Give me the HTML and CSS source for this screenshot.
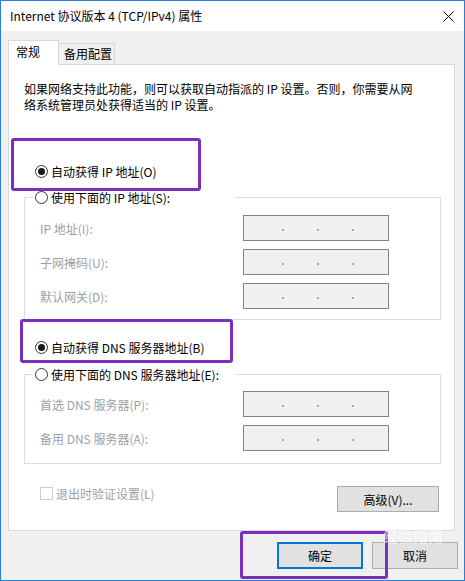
FILE: index.html
```html
<!DOCTYPE html>
<html lang="zh-CN">
<head>
    <meta charset="UTF-8">
    <title>Internet 协议版本 4 (TCP/IPv4) 属性</title>
    <link rel="stylesheet" href="styles.css">
</head>
<body>
    <div class="window">
        <div class="titlebar">
            <span class="title">Internet 协议版本 4 (TCP/IPv4) 属性</span>
            <svg class="close" width="11" height="11" viewBox="0 0 11 11">
                <path d="M0.5 0.5 L10.5 10.5 M10.5 0.5 L0.5 10.5" stroke="#000" stroke-width="1" fill="none"/>
            </svg>
        </div>

        <div class="body">
            <div class="tabs">
                <div class="tab active">常规</div>
                <div class="tab">备用配置</div>
            </div>

            <div class="panel">
                <p class="desc">如果网络支持此功能，则可以获取自动指派的 IP 设置。否则，你需要从网<br>络系统管理员处获得适当的 IP 设置。</p>

                <!-- IP address -->
                <div class="radio-row first"><span class="radio checked"></span>自动获得 IP 地址(O)</div>
                <div class="group group-ip">
                    <div class="group-head"><span class="radio"></span>使用下面的 IP 地址(S):</div>
                    <div class="field">
                        <span class="label">IP 地址(I):</span>
                        <div class="ipbox"><i></i><i></i><i></i></div>
                    </div>
                    <div class="field">
                        <span class="label">子网掩码(U):</span>
                        <div class="ipbox"><i></i><i></i><i></i></div>
                    </div>
                    <div class="field">
                        <span class="label">默认网关(D):</span>
                        <div class="ipbox"><i></i><i></i><i></i></div>
                    </div>
                </div>

                <!-- DNS -->
                <div class="radio-row second"><span class="radio checked"></span>自动获得 DNS 服务器地址(B)</div>
                <div class="group group-dns">
                    <div class="group-head"><span class="radio"></span>使用下面的 DNS 服务器地址(E):</div>
                    <div class="field">
                        <span class="label">首选 DNS 服务器(P):</span>
                        <div class="ipbox"><i></i><i></i><i></i></div>
                    </div>
                    <div class="field">
                        <span class="label">备用 DNS 服务器(A):</span>
                        <div class="ipbox"><i></i><i></i><i></i></div>
                    </div>
                </div>

                <div class="footer-row">
                    <span class="check"><span class="checkbox"></span>退出时验证设置(L)</span>
                    <button class="btn adv">高级(V)...</button>
                </div>
            </div>

            <div class="buttons">
                <button class="btn primary">确定</button>
                <button class="btn">取消</button>
            </div>
        </div>

        <!-- annotation boxes -->
        <div class="mark mark-ip"></div>
        <div class="mark mark-dns"></div>
        <div class="mark mark-ok"></div>
        <div class="watermark">经验指南</div>
    </div>
</body>
</html>
```

FILE: styles.css
```css
body {
    margin: 0;
    font-family: "Noto Sans CJK SC", "Noto Sans", sans-serif;
    font-size: 12px;
    color: #000;
}

.window {
    position: relative;
    width: 465px;
    height: 581px;
    box-sizing: border-box;
    border: 1px solid #2a7fd4;
    background: #fff;
    overflow: hidden;
}

.titlebar {
    height: 30px;
    display: flex;
    align-items: center;
    justify-content: space-between;
    padding: 0 10px 0 9px;
    background: #fff;
}

.title {
    font-size: 12px;
    line-height: 16px;
}

.close {
    display: block;
}

.body {
    height: 549px;
    box-sizing: border-box;
    background: #f0f0f0;
    padding: 9px 0 0 7px;
}

/* tabs */
.tabs {
    display: flex;
    align-items: flex-end;
    height: 24px;
}

.tab {
    box-sizing: border-box;
    height: 21px;
    width: 56px;
    border: 1px solid #d9d9d9;
    border-bottom: none;
    border-left: none;
    background: #f0f0f0;
    padding-left: 5px;
    line-height: 20px;
}

.tab.active {
    position: relative;
    z-index: 1;
    height: 25px;
    width: 51px;
    margin-bottom: -1px;
    border-left: 1px solid #d9d9d9;
    background: #fff;
    padding-left: 7px;
    line-height: 22px;
}

.panel {
    box-sizing: border-box;
    width: 447px;
    height: 467px;
    border: 1px solid #d9d9d9;
    background: #fff;
}

.desc {
    margin: 16px 0 0 15px;
    line-height: 16px;
}

/* radios */
.radio-row, .group-head {
    display: flex;
    align-items: center;
    height: 20px;
}

.radio-row {
    padding-left: 26px;
}

.radio-row.first {
    margin-top: 48px;
}

.radio-row.second {
    margin-top: 17px;
}

.radio {
    box-sizing: border-box;
    width: 13px;
    height: 13px;
    border: 1px solid #333;
    border-radius: 50%;
    background: #fff;
    margin-right: 3px;
    display: flex;
    align-items: center;
    justify-content: center;
}

.radio.checked::after {
    content: "";
    width: 7px;
    height: 7px;
    border-radius: 50%;
    background: #1a1a1a;
}

/* group boxes */
.group {
    width: 417px;
    box-sizing: border-box;
    margin-left: 15px;
    border: 1px solid #dcdcdc;
}

.group-ip {
    margin-top: 16px;
    padding-bottom: 10px;
}

.group-dns {
    margin-top: 17px;
    padding-bottom: 12px;
}

.group-head {
    width: 200px;
    margin: -11px 0 8px 8px;
    padding-left: 2px;
    background: #fff;
}

.group-dns .group-head {
    margin-bottom: 7px;
}

.field {
    display: flex;
    align-items: center;
    height: 26px;
    padding-left: 15px;
    margin-bottom: 8px;
}

.field:last-child {
    margin-bottom: 0;
}

.label {
    width: 203px;
    color: #a0a0a0;
}

.ipbox {
    box-sizing: border-box;
    width: 146px;
    height: 26px;
    border: 1px solid #838383;
    background: #f0f0f0;
    display: flex;
    align-items: center;
    gap: 33px;
    padding-left: 38px;
}

.ipbox i {
    width: 2px;
    height: 2px;
    margin-top: 3px;
    background: #a8a8a8;
}

/* footer of the tab */
.footer-row {
    display: flex;
    align-items: flex-start;
    justify-content: space-between;
    width: 399px;
    margin: 22px 0 0 31px;
}

.check {
    display: flex;
    align-items: center;
    height: 13px;
    margin-top: 1px;
    line-height: 13px;
    color: #a0a0a0;
}

.checkbox {
    box-sizing: border-box;
    width: 13px;
    height: 13px;
    border: 1px solid #cccccc;
    margin-right: 3px;
}

.btn {
    box-sizing: border-box;
    font-family: inherit;
    font-size: 12px;
    color: #000;
    background: #e1e1e1;
    border: 1px solid #adadad;
    border-radius: 0;
    padding: 0;
    cursor: pointer;
}

.btn.adv {
    width: 102px;
    height: 26px;
}

.buttons {
    display: flex;
    justify-content: flex-end;
    gap: 9px;
    margin: 11px 6px 0 0;
}

.buttons .btn {
    width: 86px;
    height: 27px;
}

.btn.primary {
    border: 2px solid #0078d7;
}

/* purple highlight boxes drawn over the dialog */
.mark {
    position: absolute;
    box-sizing: border-box;
    border: 3px solid #7a2fbf;
    border-radius: 3px;
}

.mark-ip {
    left: 10px;
    top: 137px;
    width: 190px;
    height: 53px;
}

.mark-dns {
    left: 19px;
    top: 318px;
    width: 213px;
    height: 44px;
}

.mark-ok {
    left: 239px;
    top: 530px;
    width: 148px;
    height: 48px;
}

.watermark {
    position: absolute;
    left: 382px;
    top: 524px;
    font-size: 15px;
    font-weight: bold;
    color: rgba(255, 255, 255, 0.55);
}
```
